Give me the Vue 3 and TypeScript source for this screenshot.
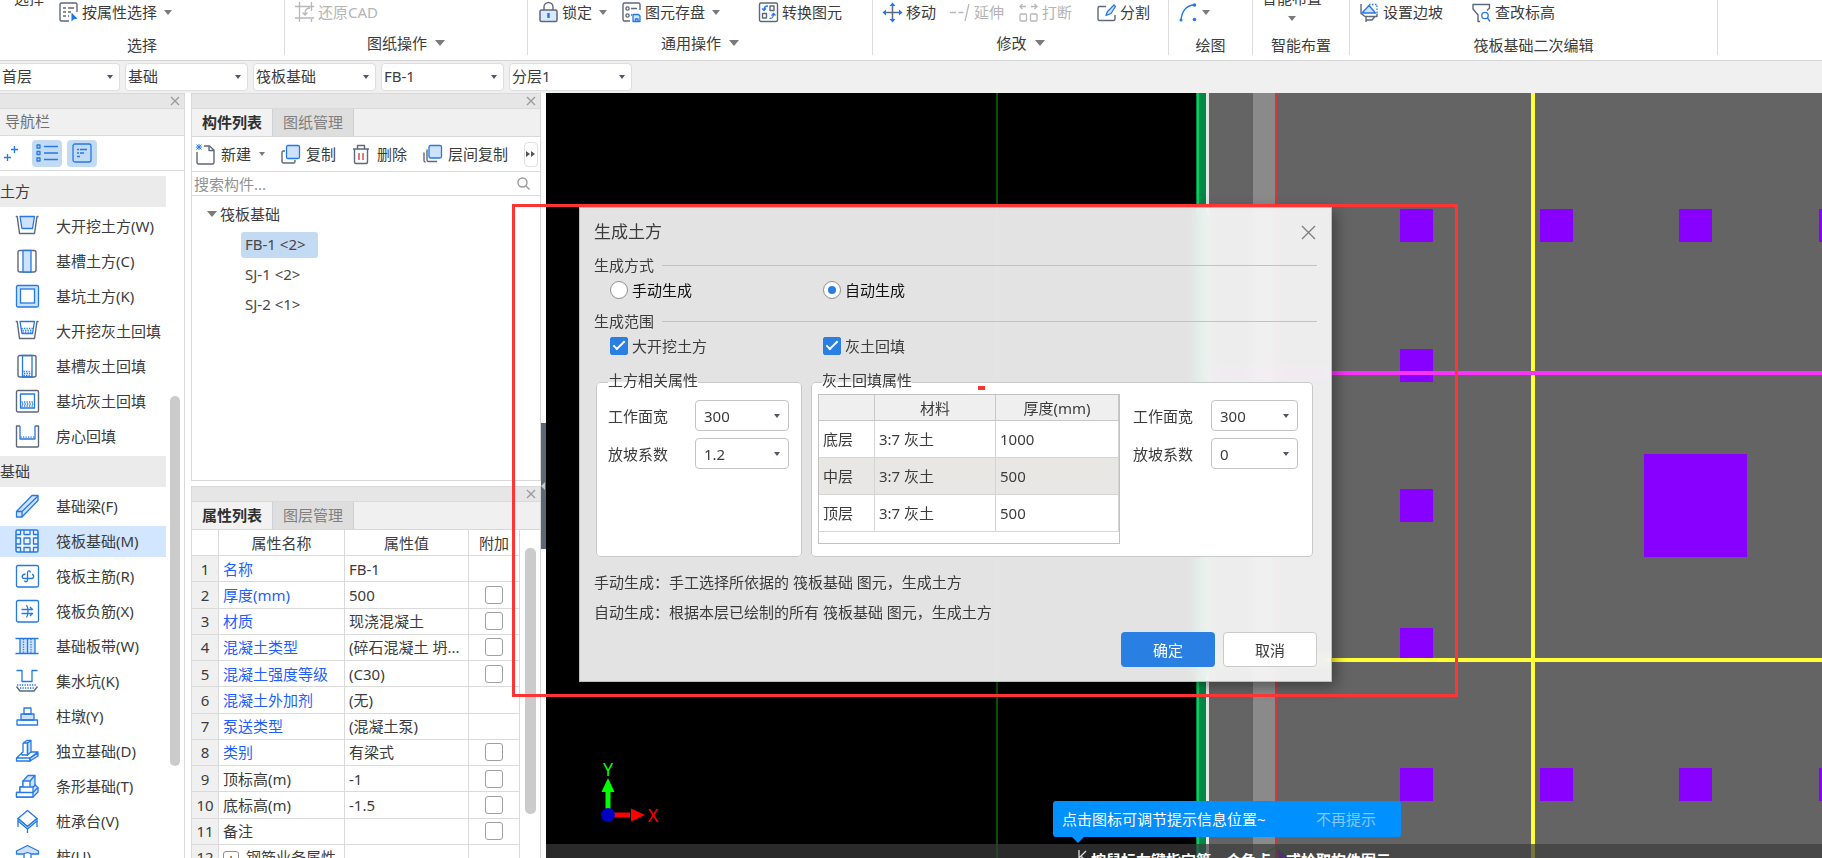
<script setup lang="ts">
import { ref } from 'vue'

interface Tool { icon?: string; text?: string; caret?: boolean; off?: boolean; far?: boolean; big?: boolean }
interface Group { key: string; label: string; caret?: boolean; tools: Tool[] }
interface NavItem { text: string; icon?: string; head?: boolean; active?: boolean }
interface Prop { name: string; value: string; blue?: boolean; check?: boolean; expand?: boolean }

const b = 'fill="none" stroke="#2479e6" stroke-width="1.3" stroke-linejoin="round"'
const g = 'fill="none" stroke="#5f6879" stroke-width="1.4" stroke-linejoin="round"'
const f = 'fill="#cfe2fb" stroke="#2479e6" stroke-width="1.3" stroke-linejoin="round"'
const s = 'fill="none" stroke="#b8b8b8" stroke-width="1.3"'
const dots = 'fill="none" stroke="#2479e6" stroke-width="1.3" stroke-dasharray="1.3 1.2"'

const icons: Record<string, string> = {
  // ribbon
  attr: `<path ${g} d="M19 11V3.500a1.500 1.500 0 0 0-1.500-1.500H3.500A1.500 1.500 0 0 0 2 3.500v15A1.500 1.500 0 0 0 3.500 20H11M5 7h3M10 7h6M5 11h3M10 11h3M5 15h3M10 15h1"/><path fill="#1976f0" d="M13.500 11.500v9l2.300-2.200 3.700-.6z"/>`,
  restore: `<path ${s} d="M1 5.500h19M5.500 1v16H20M17.500 1v9M1 17h4M5.500 17v4M17.500 18v3M16 7c-4 0-5 2-5 6M8.500 11.500l2.500 2.500 2.500-2.500"/>`,
  lock: `<path ${g} d="M6 9V6a4.500 4.500 0 0 1 9 0v3"/><rect x="2" y="9" width="17" height="11.500" rx="1.500" fill="#dbe9fc" stroke="#5f6879" stroke-width="1.500"/><path stroke="#1976f0" stroke-width="2.400" d="M10.500 12v5"/>`,
  save: `<path ${g} d="M19 9V3.500A1.500 1.500 0 0 0 17.500 2h-14A1.500 1.500 0 0 0 2 3.500v15A1.500 1.500 0 0 0 3.500 20H9M10 7.500h6M10 14h1"/><circle cx="6.500" cy="7.500" r="1.600" ${g}/><circle cx="6.500" cy="14.500" r="1.600" ${g}/><path ${f} d="M12 13.500h5.500l1.500 1.500v5.500h-7zM14.500 20.500v-2.500h2.500v2.500"/>`,
  convert: `<rect x="1.500" y="2" width="18" height="18.500" rx="1.500" ${g}/><rect x="12" y="5" width="4" height="4.500" ${g}/><rect x="4.500" y="12.500" width="4" height="4.500" ${g}/><path ${b} d="M10 5C7 5 6 6 6 9M4 7.500l2 2 2-2M11.500 17.500c3 0 4-1 4-4.500M13.500 14.500l2-2 2 2"/>`,
  move: `<path stroke="#5f6879" stroke-width="1.500" d="M10.500 7v9M6 11.500h9"/><path fill="#2479e6" d="M10.500 1.500l3 3.500h-2.200v2h-1.600V5H7.500zM10.500 21.500l3-3.500h-2.200v-2h-1.600v2H7.500zM.5 11.500L4 8.500v2.200h2v1.600H4v2.200zM20.500 11.500L17 8.500v2.200h-2v1.600h2v2.200z"/>`,
  extend: `<path ${s} d="M0 11.500h6M8.500 11.500h5M15 20l4-17"/>`,
  breakup: `<path ${s} d="M2 5.500h6M13 5.500h6M4.500 3L2 5.500 4.500 8M16.500 3L19 5.500 16.500 8"/><rect x="2" y="13" width="6.500" height="7" rx="1" ${s}/><rect x="12.500" y="13" width="6.500" height="7" rx="1" ${s}/>`,
  split: `<path ${g} d="M10 5.500H3.500A1.500 1.500 0 0 0 2 7v11a1.500 1.500 0 0 0 1.500 1.500h14A1.500 1.500 0 0 0 19 18v-4"/><path ${f} d="M10 14.500l1.500-4 6.500-6.500 1.500 1.500-4.500 7z"/>`,
  arc: `<path ${b} d="M3 19C4 10 8 5 15 4"/><circle cx="16.500" cy="4" r="1.800" fill="#2479e6"/><circle cx="3" cy="19" r="1.500" fill="#2479e6"/><circle cx="16.500" cy="18.500" r="1.800" fill="#2479e6"/>`,
  slope: `<path ${f} d="M3 12L10 4.500 16.500 12z"/><path fill="none" stroke="#2479e6" stroke-width="1.300" stroke-dasharray="1.500 1.500" d="M10 3.500h8V12"/><path ${g} d="M2 3v9.500l4 3h12v-3M7 15.500v5.500M7 19h6l3-3.500"/>`,
  level: `<path ${g} d="M9 20.500H7V14L2 8V3.500h16.500V7L16 9.500"/><circle cx="14" cy="14.500" r="3.200" ${b}/><path ${b} d="M16.500 17l2.500 3.500"/>`,
  // navigation toolbar
  plus2: `<path ${b} stroke-width="2" d="M13.500 3v7M10 6.500h7M6.500 11v7M3 14.500h7"/>`,
  list: `<path ${b} d="M8 4.500h14M8 11h14M8 17.500h14"/><rect x="1" y="3" width="3" height="3" ${b}/><rect x="1" y="9.500" width="3" height="3" ${b}/><rect x="1" y="16" width="3" height="3" ${b}/>`,
  card: `<rect x="2" y="2" width="18" height="18" rx="2" ${b}/><path ${b} d="M6 7.500h2M9 7.500h7M6 11h2M9 11h4M6 14.500h3"/>`,
  // navigation tree
  pitW: `<path ${g} d="M.7 2.500h1.500L4.500 19.500h15L22 2.500h1.500"/><path ${f} d="M5 2.500h14.500l-2 12H7z"/>`,
  trench: `<rect x="3" y="1.500" width="18" height="21.500" rx="2" ${g}/><path ${f} d="M8 1.500h8V23H8z"/>`,
  pit: `<rect x="1.500" y="1.500" width="22" height="21.500" rx="1.500" ${f}/><rect x="5.500" y="5" width="14" height="14" fill="#fff" stroke="#2479e6" stroke-width="1.300"/>`,
  pitWf: `<path ${g} d="M.7 2.500h1.500L4.500 19.500h15L22 2.500h1.500"/><path ${b} d="M5 2.500h14.500l-2 12H7z"/><path ${dots} d="M6.500 9.500h11.500M7.500 11.300h10M7.500 13.100h9"/>`,
  trenchF: `<rect x="3" y="1.500" width="18" height="21.500" rx="2" ${g}/><path ${b} d="M7.500 1.500h9.500V23H7.500z"/><path ${dots} d="M8.500 17.500h8M9 19.500h8M8.500 21.500h8"/>`,
  pitF: `<rect x="1.500" y="1.500" width="22" height="21.500" rx="1.500" ${g}/><rect x="5.500" y="5" width="14" height="14" ${b}/><path ${dots} d="M6.500 13h12M7 15h12M6.500 17h12"/>`,
  room: `<path ${g} d="M5 2H1.500v20a1 1 0 0 0 1 1h20a1 1 0 0 0 1-1V2H20"/><path ${b} d="M5 2v13h15V2"/><path ${dots} d="M5.500 13.200h14"/>`,
  beam: `<path ${f} d="M1.500 17.500L17 1.500h6v5L7 23H1.500z"/><path ${b} d="M1.500 17.500H7V23M7 17.500L23 2"/>`,
  raft: `<path fill="#eef5ff" stroke="#2479e6" stroke-width="1.500" d="M1 2.500Q1 1 2.500 1h19Q23 1 23 2.500v19q0 1.500-1.500 1.500h-19Q1 23 1 21.500z"/><path ${b} d="M5.500 1v4.500H1M9 1v4.500h6V1M18.500 1v4.500H23M5.500 23v-4.500H1M9 23v-4.500h6V23M18.500 23v-4.500H23M1 9h4.500v6H1M23 9h-4.500v6H23"/><rect x="9" y="9" width="6" height="6" ${b}/>`,
  mainBar: `<rect x="1.500" y="1.500" width="22" height="21.500" rx="1.500" ${b}/><path ${b} d="M15.500 8.500c-.5-2.500-3-2-3 0v7.500c0 2-2.500 2.500-3 .5M10.500 10c-4.500 1-4.500 4.500 0 4.500h6c3 0 2.500-4 .5-4"/>`,
  negBar: `<rect x="1.500" y="1.500" width="22" height="21.500" rx="1.500" ${b}/><path ${b} d="M6.500 10.500h11l-2.500-2.500M6.500 14.500h11l-2.500 2.500M11.500 6c2 3 2 9.500 0 12.500"/>`,
  strip: `<path fill="#cfe2fb" d="M5 4.500h15v15H5z"/><path ${b} d="M.5 4.500h23M.5 19.500h23M5 4.500v15M12.500 4.500v15M20 4.500v15"/><path ${dots} d="M8.500 5v14M16 5v14"/>`,
  sump: `<path ${b} d="M1.500 1.500H7v11h10v-11h5.500"/><path ${dots} d="M2 16h20M5 19h15"/><path ${g} d="M1.500 17.500L5 22h14l3.500-4.500"/>`,
  pier: `<path ${f} d="M6 10h13v6H6z"/><path ${b} d="M9 4h7v6H9zM2 16h20.500v5H2z"/>`,
  isolated: `<path ${f} d="M12.500 4L16 1.500V13l-3.500 3z"/><path ${f} d="M15 19l8-5v3l-8 5z"/><path ${b} d="M8 4l4-2.500h4M8 4h4.500v12H7V13M8 4v9l-6.500 6v3H15v-3H1.500M16 13h7l-8 6"/>`,
  stripF: `<path ${f} d="M8 7l5-5.500h7v9.500l3 2.500V18l-5 5H1.500v-4.500H5V13h3z"/><path fill="#fff" stroke="#2479e6" stroke-width="1.300" stroke-linejoin="round" d="M8 7h7v6H8zM5 13h13v5.500H5zM1.500 18.500H18V23H1.500z"/><path ${b} d="M15 7l5-5.500M18 13l3-2.500M18 18.500l5-5"/>`,
  cap: `<path ${b} d="M12.500 1.500L22 9.500l-9.500 8L3 9.500z"/><path ${f} d="M3 9.500l9.500 8 9.500-8v2.500l-9.500 8L3 12z"/><path ${b} d="M3 12v6M22 12v6M12.500 20v4"/>`,
  pile: `<path ${f} d="M1.500 7L12.500 1.500 23.500 7v3H17l-4.500-1.500L8 10H1.500z"/><path ${b} d="M9 10v14M16 10v14"/>`,
  // component list
  add: `<path ${g} d="M2 9v10.500A1.500 1.500 0 0 0 3.500 21h14a1.500 1.500 0 0 0 1.500-1.500V7l-4.500-4H9M14 3v4.500h5"/><path stroke="#2479e6" stroke-width="1" d="M4 1v6M1 4h6M1.500 1.500l5 5M6.500 1.500l-5 5"/>`,
  copy: `<path ${g} d="M5 8H3.500A1.500 1.500 0 0 0 2 9.500v9A1.500 1.500 0 0 0 3.500 20h10a1.500 1.500 0 0 0 1.500-1.500V17"/><rect x="6.500" y="2.500" width="13" height="13" rx="1.500" ${f}/>`,
  del: `<path ${g} d="M2 6h16M6.500 6V2.500h7V6M3.500 6v13A1.500 1.500 0 0 0 5 20.500h10a1.500 1.500 0 0 0 1.500-1.500V6"/><path stroke="#e04040" stroke-width="1.400" d="M8 10v7M12 10v7"/>`,
  layers: `<path ${g} d="M2 9.500v8A1.500 1.500 0 0 0 3.500 19M5 6.500v10.500a1.500 1.500 0 0 0 1.500 1.500H15"/><rect x="7" y="2.500" width="12.500" height="12.500" rx="1.500" ${f}/>`,
}

const groups: Group[] = [
  { key: 'select', label: '选择', tools: [{ text: '选择', big: true }, { icon: 'attr', text: '按属性选择', caret: true }] },
  { key: 'sheet', label: '图纸操作', caret: true, tools: [{ icon: 'restore', text: '还原CAD', off: true }] },
  { key: 'common', label: '通用操作', caret: true, tools: [
    { icon: 'lock', text: '锁定', caret: true }, { icon: 'save', text: '图元存盘', caret: true }, { icon: 'convert', text: '转换图元', far: true }] },
  { key: 'modify', label: '修改', caret: true, tools: [
    { icon: 'move', text: '移动' }, { icon: 'extend', text: '延伸', off: true }, { icon: 'breakup', text: '打断', off: true }, { icon: 'split', text: '分割', far: true }] },
  { key: 'draw', label: '绘图', tools: [{ icon: 'arc', caret: true }] },
  { key: 'smart', label: '智能布置', tools: [{ text: '智能布置', big: true, caret: true }] },
  { key: 'edit', label: '筏板基础二次编辑', tools: [{ icon: 'slope', text: '设置边坡' }, { icon: 'level', text: '查改标高', far: true }] },
]

const levels = [
  { name: '楼层', value: '首层' }, { name: '类别', value: '基础' }, { name: '构件类型', value: '筏板基础' },
  { name: '构件', value: 'FB-1' }, { name: '分层', value: '分层1' },
]

const nav: NavItem[] = [
  { text: '土方', head: true },
  { text: '大开挖土方(W)', icon: 'pitW' },
  { text: '基槽土方(C)', icon: 'trench' },
  { text: '基坑土方(K)', icon: 'pit' },
  { text: '大开挖灰土回填', icon: 'pitWf' },
  { text: '基槽灰土回填', icon: 'trenchF' },
  { text: '基坑灰土回填', icon: 'pitF' },
  { text: '房心回填', icon: 'room' },
  { text: '基础', head: true },
  { text: '基础梁(F)', icon: 'beam' },
  { text: '筏板基础(M)', icon: 'raft', active: true },
  { text: '筏板主筋(R)', icon: 'mainBar' },
  { text: '筏板负筋(X)', icon: 'negBar' },
  { text: '基础板带(W)', icon: 'strip' },
  { text: '集水坑(K)', icon: 'sump' },
  { text: '柱墩(Y)', icon: 'pier' },
  { text: '独立基础(D)', icon: 'isolated' },
  { text: '条形基础(T)', icon: 'stripF' },
  { text: '桩承台(V)', icon: 'cap' },
  { text: '桩(U)', icon: 'pile' },
]

const actions: Tool[] = [
  { icon: 'add', text: '新建', caret: true }, { icon: 'copy', text: '复制' },
  { icon: 'del', text: '删除' }, { icon: 'layers', text: '层间复制' },
]
const members = ['FB-1 <2>', 'SJ-1 <2>', 'SJ-2 <1>']
const current = ref('FB-1 <2>')

const props: Prop[] = [
  { name: '名称', value: 'FB-1', blue: true },
  { name: '厚度(mm)', value: '500', blue: true, check: true },
  { name: '材质', value: '现浇混凝土', blue: true, check: true },
  { name: '混凝土类型', value: '(碎石混凝土 坍...', blue: true, check: true },
  { name: '混凝土强度等级', value: '(C30)', blue: true, check: true },
  { name: '混凝土外加剂', value: '(无)', blue: true },
  { name: '泵送类型', value: '(混凝土泵)', blue: true },
  { name: '类别', value: '有梁式', blue: true, check: true },
  { name: '顶标高(m)', value: '-1', check: true },
  { name: '底标高(m)', value: '-1.5', check: true },
  { name: '备注', value: '', check: true },
  { name: '钢筋业务属性', value: '', expand: true },
]

const mode = ref('auto')
const dig = ref(true)
const fill = ref(true)
const layers = [
  { name: '底层', mat: '3:7 灰土', t: 1000 },
  { name: '中层', mat: '3:7 灰土', t: 500 },
  { name: '顶层', mat: '3:7 灰土', t: 500 },
]
const digFields = [{ id: 'd1', label: '工作面宽', value: '300' }, { id: 'd2', label: '放坡系数', value: '1.2' }]
const fillFields = [{ id: 'f1', label: '工作面宽', value: '300' }, { id: 'f2', label: '放坡系数', value: '0' }]

// column footings on the drawing
const footings = [
  [854, 116], [994, 116], [1133, 116], [1273, 116],
  [854, 256], [854, 396], [854, 535],
  [854, 675], [994, 675], [1133, 675], [1273, 675],
]
</script>

<template>
  <div class="app">
    <header class="ribbon">
      <section v-for="gr in groups" :key="gr.key" class="group" :class="'g-' + gr.key">
        <div class="tools">
          <button v-for="(t, i) in gr.tools" :key="i" class="tool" :class="{ off: t.off, far: t.far, big: t.big }" :disabled="t.off">
            <svg v-if="t.icon" width="22" height="23" viewBox="0 0 22 23" v-html="icons[t.icon]"></svg>
            <span v-if="t.text">{{ t.text }}</span>
            <i v-if="t.caret" class="caret"></i>
          </button>
        </div>
        <div class="glabel" :class="{ menu: gr.caret }">{{ gr.label }}<i v-if="gr.caret" class="caret large"></i></div>
      </section>
    </header>

    <div class="levels">
      <div v-for="l in levels" :key="l.name" class="combo">
        <select :aria-label="l.name"><option>{{ l.value }}</option></select>
        <i class="caret dark"></i>
      </div>
    </div>

    <main class="work">
      <nav class="nav">
        <div class="strip"><button class="x" aria-label="关闭"><svg width="10" height="10" viewBox="0 0 10 10"><path d="M1 1l8 8M9 1L1 9" /></svg></button></div>
        <h2 class="navtitle">导航栏</h2>
        <div class="navbar">
          <button class="nb plain" aria-label="添加"><svg width="19" height="20" viewBox="0 0 19 20" v-html="icons.plus2"></svg></button>
          <button class="nb" aria-label="列表"><svg width="23" height="22" viewBox="0 0 23 22" v-html="icons.list"></svg></button>
          <button class="nb" aria-label="详情"><svg width="22" height="22" viewBox="0 0 22 22" v-html="icons.card"></svg></button>
        </div>
        <div class="navbody">
          <div class="navlist">
            <template v-for="n in nav" :key="n.text">
              <h3 v-if="n.head" class="navhead">{{ n.text }}</h3>
              <button v-else class="navitem" :class="{ active: n.active }">
                <svg width="25" height="25" viewBox="0 0 25 25" v-html="icons[n.icon!]"></svg>{{ n.text }}
              </button>
            </template>
          </div>
          <div class="track"><div class="thumb"></div></div>
        </div>
      </nav>

      <div class="side">
        <section class="panel list">
          <div class="strip"><button class="x" aria-label="关闭"><svg width="10" height="10" viewBox="0 0 10 10"><path d="M1 1l8 8M9 1L1 9" /></svg></button></div>
          <div class="tabs"><button class="tab on">构件列表</button><button class="tab">图纸管理</button></div>
          <div class="actions">
            <button v-for="a in actions" :key="a.text" class="act">
              <svg width="21" height="22" viewBox="0 0 21 22" v-html="icons[a.icon!]"></svg>{{ a.text }}<i v-if="a.caret" class="caret"></i>
            </button>
            <button class="more" aria-label="更多"><svg width="10" height="8" viewBox="0 0 10 8"><path fill="#555" d="M0 1l4 3-4 3zM5 1l4 3-4 3z" /></svg></button>
          </div>
          <label class="search">
            <input type="text" placeholder="搜索构件..." aria-label="搜索构件">
            <svg width="13" height="13" viewBox="0 0 13 13"><circle cx="5.500" cy="5.500" r="4.500" /><path d="M9 9l3.500 3.500" /></svg>
          </label>
          <div class="tree">
            <div class="root"><i class="caret large"></i>筏板基础</div>
            <button v-for="m in members" :key="m" class="leaf" :class="{ on: m === current }" @click="current = m">{{ m }}</button>
          </div>
        </section>

        <section class="panel props">
          <div class="strip"><button class="x" aria-label="关闭"><svg width="10" height="10" viewBox="0 0 10 10"><path d="M1 1l8 8M9 1L1 9" /></svg></button></div>
          <div class="tabs"><button class="tab on">属性列表</button><button class="tab">图层管理</button></div>
          <div class="propbody">
            <table class="ptable">
              <colgroup><col class="c1"><col class="c2"><col class="c3"><col class="c4"></colgroup>
              <thead><tr><th></th><th>属性名称</th><th>属性值</th><th>附加</th></tr></thead>
              <tbody>
                <tr v-for="(p, i) in props" :key="p.name">
                  <td class="num">{{ i + 1 }}</td>
                  <td :class="{ blue: p.blue }"><button v-if="p.expand" class="exp" aria-label="展开">+</button>{{ p.name }}</td>
                  <td>{{ p.value }}</td>
                  <td class="chk"><input v-if="p.check" type="checkbox" :aria-label="p.name + ' 附加'"></td>
                </tr>
              </tbody>
            </table>
            <div class="ptrack"><div class="thumb"></div></div>
          </div>
        </section>
      </div>

      <div class="splitter"><button class="grip" aria-label="收起"><i></i></button></div>

      <section class="canvas">
        <svg class="cad" width="100%" height="100%">
          <rect x="663" y="0" width="4000" height="2000" fill="#646464" />
          <rect x="450" y="0" width="2" height="2000" fill="#064f06" />
          <rect x="650" y="0" width="10" height="2000" fill="#008844" />
          <rect x="651" y="0" width="2" height="2000" fill="#00d068" />
          <rect x="660" y="0" width="3" height="2000" fill="#e6e6e6" />
          <rect x="707" y="0" width="22" height="2000" fill="#8a8a8a" />
          <rect x="729" y="0" width="2" height="2000" fill="#c83c3c" />
          <rect v-for="(p, i) in footings" :key="i" :x="p[0]" :y="p[1]" width="33" height="33" fill="#8800ff" />
          <rect x="1098" y="361" width="103" height="103" fill="#8800ff" />
          <rect x="731" y="568" width="4000" height="6" fill="#646464" />
          <rect x="660" y="565" width="4000" height="4" fill="#ffff33" />
          <rect x="985" y="0" width="4" height="2000" fill="#ffff33" />
          <rect x="660" y="278" width="4000" height="4" fill="#fa32fa" />
          <path d="M62 722v-24" stroke="#00ff00" stroke-width="5" />
          <path d="M62 685l6.500 14h-13z" fill="#00ff00" />
          <path d="M66 722h18" stroke="#ff0000" stroke-width="5" />
          <path d="M99 722l-14-6.500v13z" fill="#ff0000" />
          <circle cx="62" cy="722" r="7" fill="#0000c0" />
          <text x="62" y="683" class="axis" fill="#00ff00">Y</text>
          <text x="107" y="729" class="axis" fill="#ff0000">X</text>
        </svg>

        <svg class="cursor" width="28" height="13" viewBox="0 0 28 13"><path d="M1 9v4M1 9L14 2l13 7v4" fill="none" stroke="#2c8a35" stroke-width="1.500" /><path d="M15 4l13 9H17z" fill="#7020e0" /></svg>
        <div class="status">
          <svg width="10" height="14" viewBox="0 0 10 14"><path d="M2 0v14M9 1L2 8M4 6l5 6" /></svg>
          <span>按鼠标左键指定第一个角点，或拾取构件图元</span>
        </div>

        <div class="hint"><span>点击图标可调节提示信息位置~</span><button>不再提示</button></div>

        <form class="dialog" role="dialog" aria-label="生成土方" @submit.prevent>
          <div class="dhead">
            <h1>生成土方</h1>
            <button type="button" class="dx" aria-label="关闭"><svg width="15" height="15" viewBox="0 0 15 15"><path d="M1 1l13 13M14 1L1 14" /></svg></button>
          </div>
          <div class="sec">生成方式</div>
          <div class="opts">
            <label><input v-model="mode" type="radio" name="mode" value="manual"><span class="blk">手动生成</span></label>
            <label><input v-model="mode" type="radio" name="mode" value="auto"><span class="blk">自动生成</span></label>
          </div>
          <div class="sec second">生成范围</div>
          <div class="opts">
            <label><input v-model="dig" type="checkbox"><span>大开挖土方</span></label>
            <label><input v-model="fill" type="checkbox"><span>灰土回填</span></label>
          </div>
          <div class="sets">
            <fieldset class="fs1">
              <legend>土方相关属性</legend>
              <div class="fields">
                <template v-for="d in digFields" :key="d.id">
                  <label :for="d.id">{{ d.label }}</label>
                  <div class="combo"><select :id="d.id"><option>{{ d.value }}</option></select><i class="caret dark"></i></div>
                </template>
              </div>
            </fieldset>
            <fieldset class="fs2">
              <legend>灰土回填属性</legend>
              <div class="fillrow">
                <div class="lwrap">
                  <table class="ltable">
                    <colgroup><col class="l1"><col class="l2"><col class="l3"></colgroup>
                    <thead><tr><th></th><th>材料</th><th>厚度(mm)</th></tr></thead>
                    <tbody><tr v-for="l in layers" :key="l.name"><td>{{ l.name }}</td><td>{{ l.mat }}</td><td>{{ l.t }}</td></tr></tbody>
                  </table>
                </div>
                <div class="fields">
                  <template v-for="d in fillFields" :key="d.id">
                    <label :for="d.id">{{ d.label }}</label>
                    <div class="combo"><select :id="d.id"><option>{{ d.value }}</option></select><i class="caret dark"></i></div>
                  </template>
                </div>
              </div>
            </fieldset>
          </div>
          <div class="notes">
            <p>手动生成：手工选择所依据的 筏板基础 图元，生成土方</p>
            <p>自动生成：根据本层已绘制的所有 筏板基础 图元，生成土方</p>
          </div>
          <div class="btns"><button type="submit" class="ok">确定</button><button type="button" class="cancel">取消</button></div>
        </form>
      </section>

      <div class="mark"></div>
      <div class="dash"></div>
    </main>
  </div>
</template>

<style>
body { margin: 0; overflow: hidden; }
</style>

<style scoped>
.app {
  height: 100vh; display: flex; flex-direction: column; overflow: hidden; background: #fff;
  font: 15px/20px "Noto Sans", "Noto Sans CJK SC", sans-serif; color: #3c3c3c;
}
.app *, .app *::before, .app *::after { box-sizing: border-box; }
button, select, input { font: inherit; color: inherit; margin: 0; }
button { background: none; border: 0; padding: 0; white-space: nowrap; }
h1, h2, h3, p { margin: 0; font-weight: 400; }
svg { flex: none; display: block; }
.caret { flex: none; width: 0; height: 0; border: 4px solid transparent; border-bottom: 0; border-top: 5px solid #7a7a7a; }
.caret.large { border-width: 5px 5px 0; border-top-width: 6px; }
.caret.dark { border-width: 4px 3px 0; border-top-color: #505868; }

.ribbon { flex: none; height: 61px; display: flex; overflow: hidden; border-bottom: 1px solid #d4d4d4; }
.group { flex: none; height: 55px; border-right: 1px solid #dcdcdc; display: flex; flex-direction: column; }
.g-select { width: 285px; }
.g-sheet { width: 243px; }
.g-common { width: 345px; }
.g-modify { width: 296px; }
.g-draw { width: 84px; }
.g-smart { width: 97px; }
.g-edit { width: 368px; }
.tools { flex: none; height: 32px; display: flex; gap: 14px; padding: 0 0 0 9px; align-items: flex-start; }
.g-select .tools { padding-left: 14px; }
.g-common .tools { padding-left: 10px; }
.tool { display: flex; align-items: center; height: 24px; gap: 2px; }
.tool .caret { margin-left: 5px; }
.g-draw .tool .caret { margin-left: 0; }
.tool.off { color: #b4b4b4; }
.tool.far { margin-left: 10px; }
.g-common .far { margin-left: 24px; }
.g-edit .far { margin-left: 14px; }
.tool.big { flex-direction: column; margin-top: -12px; height: 36px; gap: 8px; }
.tool.big .caret { margin: 0; }
.glabel { flex: none; display: flex; justify-content: center; align-items: center; gap: 8px; line-height: 20px; padding-top: 3px; }
.glabel.menu { padding-top: 1px; }

.levels { flex: none; height: 32px; display: flex; align-items: center; gap: 5px; background: #f0f0f0; padding: 0 5px 1px 0; }
.combo { display: grid; align-items: center; }
.combo > * { grid-area: 1 / 1; }
.combo select {
  appearance: none; width: 100%; height: 100%; background: #fff; border: 1px solid #dedede; border-radius: 4px;
  padding: 0 20px 0 3px; outline: 0;
}
.combo .caret { justify-self: end; margin-right: 9px; pointer-events: none; }
.levels .combo { width: 123px; height: 28px; }
.levels .combo select { padding-left: 2px; padding-bottom: 2px; }
.levels .combo:first-child { width: 120px; }
.levels .combo:first-child select { border-left: 0; border-radius: 0 4px 4px 0; }
.levels .caret { margin-right: 7px; }

.work { flex: 1; min-height: 0; display: flex; position: relative; background: #fff; }
.strip { flex: none; height: 16px; display: flex; justify-content: flex-end; align-items: center; padding-right: 4px; background: #e6e6e6; border: 1px solid #dadada; border-width: 1px 0; }
.x svg path { stroke: #9a9a9a; stroke-width: 1.300; }
.nav { flex: none; width: 185px; display: flex; flex-direction: column; border-right: 1px solid #d8d8d8; }
.navtitle { height: 27px; font-size: 15px; line-height: 24px; padding-left: 5px; background: #f0f0f0; color: #707070; border-bottom: 1px solid #dadada; }
.navbar { height: 35px; display: flex; align-items: center; gap: 5px; border-bottom: 1px solid #dadada; }
.nb { width: 30px; height: 27px; display: grid; place-items: center; border-radius: 4px; background: #c3daf3; }
.nb.plain { background: none; width: 27px; padding-right: 6px; }
.navbody { flex: 1; min-height: 0; display: flex; overflow: hidden; }
.navlist { width: 166px; padding-top: 5px; display: flex; flex-direction: column; gap: 4px; overflow: hidden; }
.navhead { flex: none; height: 31px; font-size: 15px; line-height: 30px; background: #ebebeb; }
.navitem { flex: none; height: 31px; display: flex; align-items: center; gap: 16px; padding: 0 0 1px 15px; }
.navitem.active { background: #d2e6ff; }
.thumb { background: #cbcbcb; border-radius: 5px; }
.track { width: 18px; padding: 225px 4px 0; }
.track .thumb { height: 370px; }

.side { flex: none; width: 350px; margin-left: 6px; display: flex; flex-direction: column; gap: 5px; min-height: 0; }
.panel { display: flex; flex-direction: column; border: 1px solid #d8d8d8; border-top: 0; }
.list { flex: none; height: 388px; }
.props { flex: 1; min-height: 0; border-bottom: 0; }
.tabs { flex: none; height: 28px; display: flex; background: #f0f0f0; border-bottom: 1px solid #d8d8d8; }
.tab { width: 81px; padding-bottom: 1px; color: #808080; background: #dedede; border: 1px solid #cdd0d4; border-width: 0 1px 0 0; }
.tab.on { color: #303030; font-weight: 700; background: #f2f2f2; }
.actions { flex: none; height: 35px; display: flex; align-items: center; gap: 15px; padding: 0 2px 0 3px; border-bottom: 1px solid #dadada; }
.act { display: flex; align-items: center; gap: 5px; }
.act .caret { margin-left: 3px; border-width: 4px 3px 0; }
.more { width: 14px; height: 25px; margin-left: auto; display: grid; place-items: center; border: 1px solid #e0e0e0; border-radius: 4px; }
.search { flex: none; height: 24px; display: flex; align-items: center; padding: 0 10px 0 2px; border-bottom: 1px solid #dadada; }
.search input { flex: 1; min-width: 0; border: 0; outline: 0; padding: 0; background: none; height: 20px; }
.search input::placeholder { color: #929292; }
.search svg { fill: none; stroke: #9a9a9a; stroke-width: 1.400; }
.tree { display: flex; flex-direction: column; align-items: flex-start; gap: 4px; padding-top: 4px; }
.root { display: flex; align-items: center; gap: 3px; height: 28px; padding-left: 15px; }
.leaf { height: 26px; margin-left: 49px; padding: 0 12px 2px 4px; border-radius: 3px; color: #484848; }
.leaf.on { background: #c3daf3; }
.propbody { flex: 1; min-height: 0; display: flex; overflow: hidden; align-items: flex-start; }
.ptable { width: 328px; height: 341px; table-layout: fixed; border-collapse: separate; border-spacing: 0; flex: none; }
.c1 { width: 27px; } .c2 { width: 126px; } .c3 { width: 124px; } .c4 { width: 51px; }
.ptable th { font-weight: 400; height: 26px; padding: 0; border: 1px solid #dadada; border-width: 0 1px 1px 0; }
.ptable td { height: 26px; padding: 0 0 0 4px; border: 1px solid #dadada; border-width: 0 1px 1px 0; white-space: nowrap; overflow: hidden; }
.ptable td.num { padding: 0; text-align: center; background: #f0f0f0; }
.ptable td.blue { color: #1f5fff; }
.ptable td.chk { padding: 0; }
.chk input { appearance: none; display: block; width: 18px; height: 18px; margin: 0 auto; border: 1px solid #a0a0a0; border-radius: 3px; background: #fff; }
.exp { width: 16px; height: 16px; line-height: 12px; border: 1px solid #909090; border-radius: 3px; margin-right: 7px; vertical-align: middle; }
.ptrack { flex: 1; padding: 18px 4px 0 5px; }
.ptrack .thumb { height: 266px; }

.splitter { flex: none; width: 5px; padding-top: 330px; }
.grip { width: 5px; height: 126px; background: #5b6875; display: flex; align-items: center; }
.grip i { border: 4px solid transparent; border-left: 0; border-right-color: #c4c8cc; }

.canvas { flex: 1; min-width: 0; position: relative; overflow: hidden; background: #000; }
.cad { position: absolute; left: 0; top: 0; }
.axis { font-size: 18px; text-anchor: middle; }
.status { position: absolute; left: 0; right: 0; bottom: 0; height: 14px; overflow: hidden; display: flex; align-items: flex-start; gap: 4px; padding-left: 531px; background: rgba(60, 60, 60, .7); color: #fff; font-weight: 700; line-height: 32px; white-space: nowrap; }
.status svg { margin-top: 6px; fill: none; stroke: #ddd; stroke-width: 1.300; }
.cursor { position: absolute; left: 716px; bottom: 0; }
.hint { position: absolute; left: 507px; bottom: 21px; width: 348px; height: 36px; display: flex; align-items: center; justify-content: space-between; padding: 0 25px 0 9px; background: #0090ff; border-radius: 3px; color: #fff; }
.hint::after { content: ""; position: absolute; left: 19px; top: 36px; border: 6px solid transparent; border-top-color: #0090ff; border-bottom: 0; }
.hint button { color: #80c8ff; }

.dialog { position: absolute; left: 33px; top: 114px; width: 753px; padding: 0 14px 14px; border: 1px solid #bdbdbd; background: rgba(252, 252, 252, .9); backdrop-filter: blur(6px); box-shadow: 3px 4px 14px rgba(0, 0, 0, .4); }
.dhead { height: 48px; display: flex; justify-content: space-between; align-items: center; padding-right: 1px; }
.dhead h1 { font-size: 17px; }
.dx svg { fill: none; stroke: #808080; stroke-width: 1.400; }
.sec { display: flex; align-items: center; gap: 8px; height: 18px; }
.sec::after { content: ""; flex: 1; border-top: 1px solid #c2c2c2; }
.sec.second { margin-top: 6px; }
.opts { height: 32px; display: grid; grid-template-columns: 213px 1fr; padding-left: 16px; }
.opts label { display: flex; align-items: center; gap: 4px; }
.opts .blk { color: #111; }
.opts input { appearance: none; width: 18px; height: 18px; display: grid; place-items: center; background: #fff; border: 1px solid #909090; }
.opts input[type="radio"] { border-radius: 50%; }
.opts input[type="radio"]:checked::before { content: ""; width: 8px; height: 8px; border-radius: 50%; background: #2a7fe2; }
.opts input[type="checkbox"] { border-radius: 2px; }
.opts input[type="checkbox"]:checked { background: #2a7fe2; border-color: #2a7fe2; }
.opts input[type="checkbox"]:checked::before { content: ""; width: 12px; height: 6px; border: 2px solid #fff; border-width: 0 0 2px 2px; transform: rotate(-45deg); margin-bottom: 4px; }
.sets { display: grid; grid-template-columns: 206px 1fr; gap: 9px; margin: 8px 4px 0 2px; }
fieldset { margin: 0; min-width: 0; height: 187px; padding: 0; border: 1px solid #c8c8c8; border-radius: 4px; background: #fff; }
legend { padding: 0 0 4px; }
.fs1 legend { margin-left: 11px; }
.fs2 legend { margin-left: 10px; }
.fields { display: grid; grid-template-columns: 60px 94px; column-gap: 27px; row-gap: 7px; padding: 6px 0 0 11px; align-content: start; align-items: center; }
.fields label { white-space: nowrap; }
.fields .combo { height: 31px; }
.fields select { border-color: #c4c4c4; padding-left: 8px; }
.fillrow { display: flex; padding-left: 6px; }
.fillrow .fields { grid-template-columns: 60px 87px; column-gap: 18px; padding: 6px 0 0 13px; }
.lwrap { width: 302px; height: 150px; border: 1px solid #c2c2c2; }
.ltable { width: 300px; table-layout: fixed; border-collapse: separate; border-spacing: 0; }
.l1 { width: 56px; } .l2 { width: 121px; } .l3 { width: 123px; }
.ltable th { font-weight: 400; height: 26px; padding: 0; background: #efefef; border: 1px solid #c8c8c8; border-width: 0 1px 1px 0; }
.ltable td { height: 37px; padding: 0 0 0 4px; border: 1px solid #d4d4d4; border-width: 0 1px 1px 0; }
.ltable tbody tr:nth-child(2) td { background: #e8e7e3; }
.notes { margin-top: 10px; line-height: 30px; }
.btns { display: flex; justify-content: flex-end; gap: 8px; margin-top: 5px; }
.btns button { width: 94px; height: 35px; border-radius: 4px; }
.ok { background: #2a7fe2; color: #fff; }
.cancel { background: #fff; border: 1px solid #cacaca; }

.mark { position: absolute; left: 512px; top: 111px; width: 946px; height: 493px; border: 3px solid #ff3535; pointer-events: none; }
.dash { position: absolute; left: 978px; top: 293px; width: 7px; height: 4px; background: #ff3535; }
</style>
